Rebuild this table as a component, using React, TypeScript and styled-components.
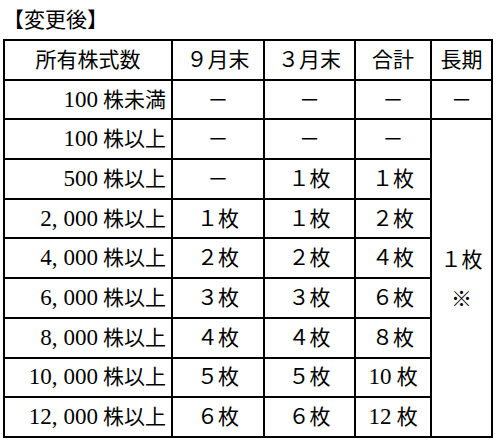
import React from 'react';
import styled, { createGlobalStyle } from 'styled-components';

const GlobalStyle = createGlobalStyle`
  html, body {
    margin: 0;
    padding: 0;
    background: #ffffff;
  }
  body {
    font-family: 'Liberation Serif', 'Noto Sans CJK JP', serif;
    color: #000;
  }
`;

const Page = styled.div`
  width: 497px;
  height: 442px;
  padding: 0 0 0 3px;
  box-sizing: border-box;
  overflow: hidden;
`;

const Title = styled.div`
  height: 39px;
  line-height: 40px;
  font-size: 21px;
`;

const Table = styled.table`
  border-collapse: collapse;
  table-layout: fixed;
  font-size: 21px;
  width: 490px;
`;

const Col = styled.col<{ $w: number }>`
  width: ${(p) => p.$w}px;
`;

const Cell = styled.td<{ $left?: boolean }>`
  border: 2px solid #000;
  height: 39.7px;
  box-sizing: border-box;
  padding: 0 ${(p) => (p.$left ? '5px' : '0')} 0 0;
  text-align: ${(p) => (p.$left ? 'right' : 'center')};
  vertical-align: middle;
  white-space: nowrap;
  line-height: 24px;
`;

const HeadCell = styled(Cell)`
  text-align: center;
  padding: 0;
`;

const Merged = styled(Cell)`
  line-height: 39px;
  padding-top: 4px;
`;

const Digits = styled.span`
  font-size: 23px;
`;

const Comma = styled.span`
  margin-right: 6px;
`;

const Unit = styled.span`
  margin-left: 5px;
`;

type Row = { n: string; unit: string; sep: string; mar: string; sum: string };

const rows: Row[] = [
  { n: '100', unit: '株未満', sep: '－', mar: '－', sum: '－' },
  { n: '100', unit: '株以上', sep: '－', mar: '－', sum: '－' },
  { n: '500', unit: '株以上', sep: '－', mar: '１枚', sum: '１枚' },
  { n: '2,000', unit: '株以上', sep: '１枚', mar: '１枚', sum: '２枚' },
  { n: '4,000', unit: '株以上', sep: '２枚', mar: '２枚', sum: '４枚' },
  { n: '6,000', unit: '株以上', sep: '３枚', mar: '３枚', sum: '６枚' },
  { n: '8,000', unit: '株以上', sep: '４枚', mar: '４枚', sum: '８枚' },
  { n: '10,000', unit: '株以上', sep: '５枚', mar: '５枚', sum: '10' },
  { n: '12,000', unit: '株以上', sep: '６枚', mar: '６枚', sum: '12' },
];

const Num = ({ value }: { value: string }) => {
  const parts = value.split(',');
  if (parts.length === 1) return <Digits>{value}</Digits>;
  return (
    <Digits>
      {parts[0]}
      <Comma>,</Comma>
      {parts[1]}
    </Digits>
  );
};

export default function App() {
  return (
    <>
      <GlobalStyle />
      <Page>
        <Title>【変更後】</Title>
        <Table>
          <colgroup>
            <Col $w={168} />
            <Col $w={92} />
            <Col $w={91} />
            <Col $w={76} />
            <Col $w={61} />
          </colgroup>
          <tbody>
            <tr>
              <HeadCell>所有株式数</HeadCell>
              <HeadCell>９月末</HeadCell>
              <HeadCell>３月末</HeadCell>
              <HeadCell>合計</HeadCell>
              <HeadCell>長期</HeadCell>
            </tr>
            {rows.map((r, i) => (
              <tr key={i}>
                <Cell $left>
                  <Num value={r.n} />
                  <Unit>{r.unit}</Unit>
                </Cell>
                <Cell>{r.sep}</Cell>
                <Cell>{r.mar}</Cell>
                <Cell>
                  {/^\d+$/.test(r.sum) ? (
                    <>
                      <Digits>{r.sum}</Digits> 枚
                    </>
                  ) : (
                    r.sum
                  )}
                </Cell>
                {i === 0 && <Cell>－</Cell>}
                {i === 1 && (
                  <Merged rowSpan={8}>
                    １枚
                    <br />※
                  </Merged>
                )}
              </tr>
            ))}
          </tbody>
        </Table>
      </Page>
    </>
  );
}
